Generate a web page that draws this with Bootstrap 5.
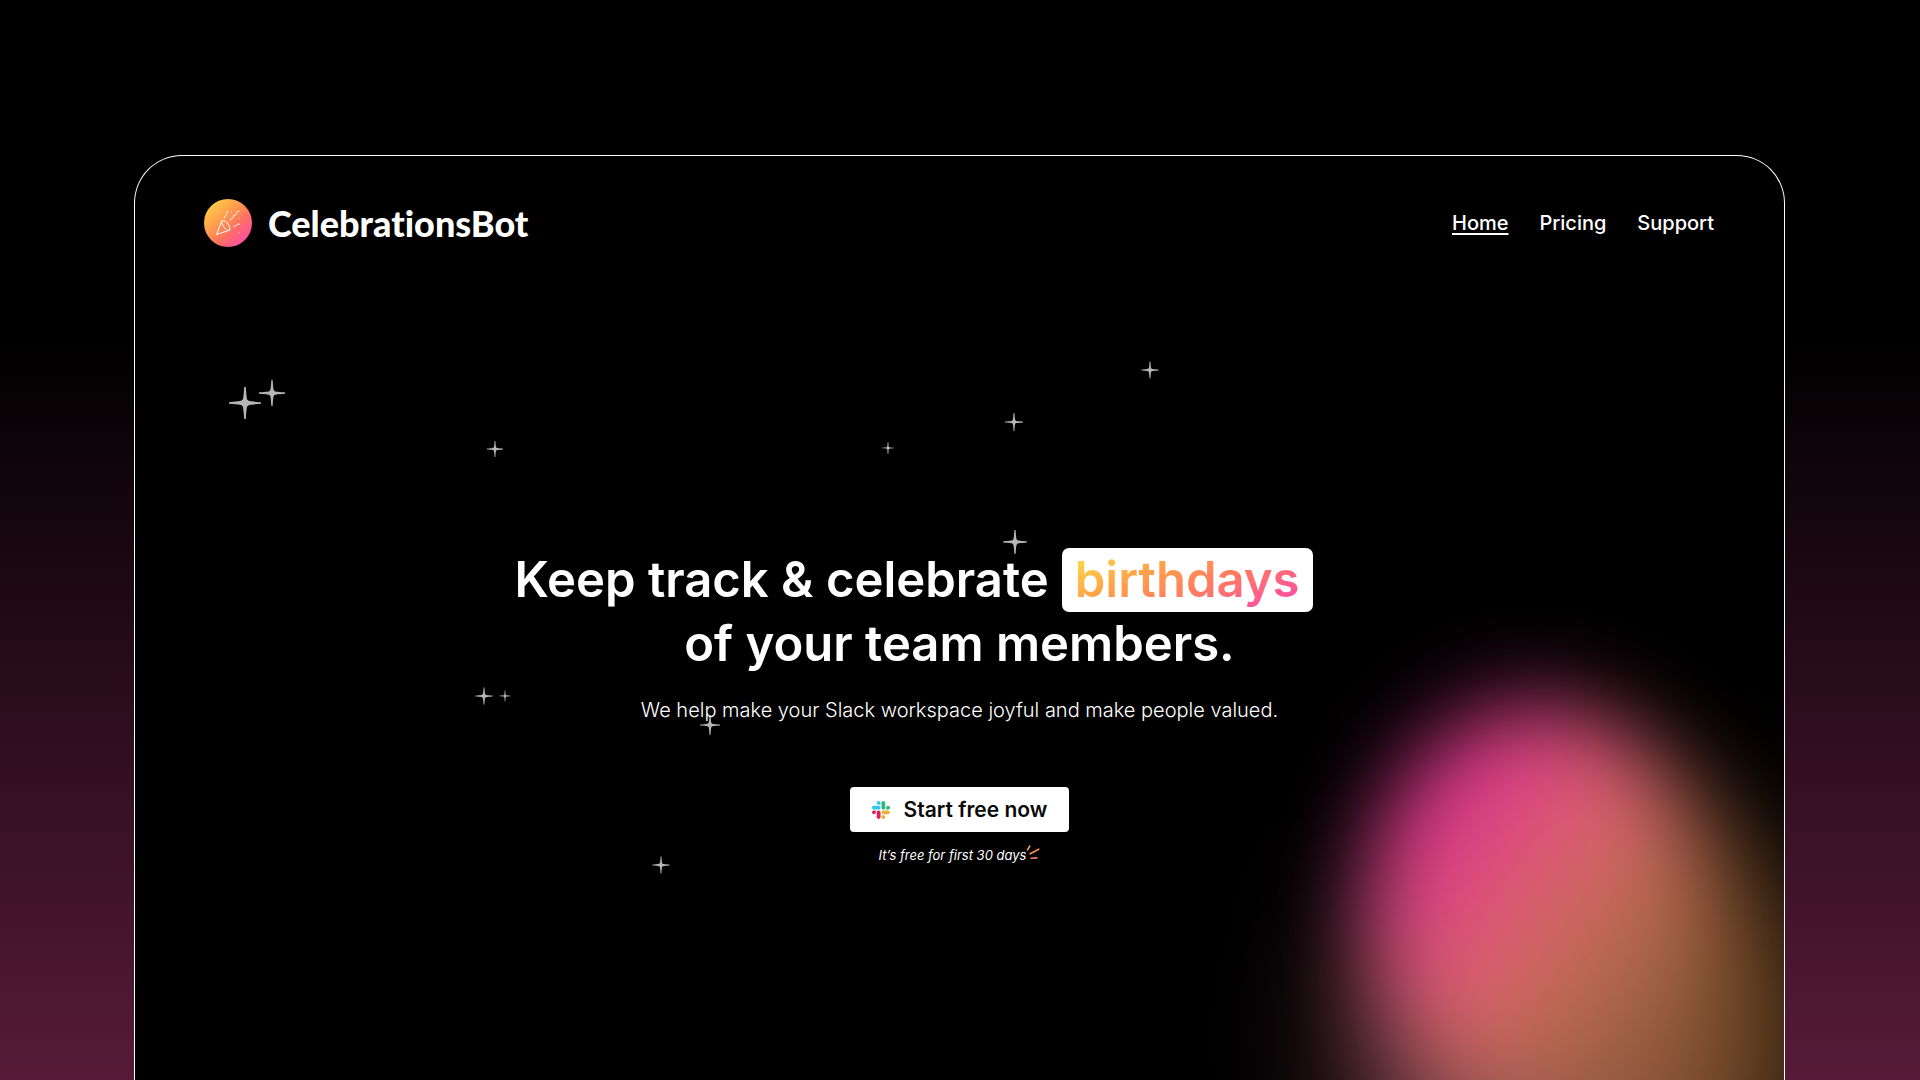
<!DOCTYPE html>
<html lang="en">
<head>
<meta charset="utf-8">
<meta name="viewport" content="width=device-width, initial-scale=1">
<title>CelebrationsBot</title>
<link href="https://cdn.jsdelivr.net/npm/bootstrap@5.3.0/dist/css/bootstrap.min.css" rel="stylesheet">
<style>
  body { font-family: Inter, sans-serif; color: #fff; background: linear-gradient(180deg, #000 31%, #571a38 100%); min-height: 100vh; padding: 155px 135px 0 134px; }
  .stage { border: 1px solid #fff; border-bottom: 0; border-radius: 48px 48px 0 0; background: #000; min-height: calc(100vh - 155px); overflow: hidden; }
  .sky { inset: 0; width: 100%; height: 100%; pointer-events: none; }
  .topbar { padding: 42px 70px 0 69px; }
  .brand-name { font-family: Lato, sans-serif; font-weight: 900; font-size: 36px; line-height: 50px; font-variant-ligatures: none; }
  .site-links { --bs-nav-link-padding-x: 0; --bs-nav-link-padding-y: 0; gap: 31px; }
  .site-links .nav-link { --bs-nav-link-color: #fff; --bs-nav-link-hover-color: #ff9a4c; --bs-nav-link-font-weight: 500; font-size: 20px; line-height: 28px; text-underline-offset: 3px; }
  .hero { padding: 300px 16px 48px; }
  .headline { font-size: 49px; font-weight: 600; line-height: 64px; width: 890px; max-width: 100%; margin-bottom: 20px; }
  .headline-row { column-gap: 13px; }
  .highlight { background: #fff; border-radius: 7px; padding: 0 13px; }
  .highlight-text { display: block; background: linear-gradient(155deg, #ffdb45 5%, #ff9f4a 35%, #ff7a63 60%, #ff4da6 92%); -webkit-background-clip: text; background-clip: text; color: transparent; }
  .pitch { font-size: 20px; font-weight: 300; line-height: 28px; margin-bottom: 63px; }
  .cta { --bs-btn-bg: #fff; --bs-btn-color: #0a0a0a; --bs-btn-hover-bg: #eee; --bs-btn-hover-color: #0a0a0a; --bs-btn-border-width: 0; --bs-btn-border-radius: 4px; --bs-btn-font-size: 21px; --bs-btn-font-weight: 600; --bs-btn-line-height: 29px; --bs-btn-padding-x: 22px; --bs-btn-padding-y: 8px; gap: 14px; margin-bottom: 13px; }
  .fineprint { font-size: 13px; line-height: 20px; }
</style>
<script src="https://cdn.jsdelivr.net/npm/bootstrap@5.3.0/dist/js/bootstrap.bundle.min.js"></script>
</head>
<body>
<div class="stage position-relative">
  <!-- night sky: glow anchored to the right edge, stars above it -->
  <svg class="sky position-absolute" aria-hidden="true">
    <defs>
      <linearGradient id="glowFill" gradientUnits="userSpaceOnUse" x1="-384" y1="624" x2="-24" y2="884">
        <stop offset="0.05" stop-color="#dc2f92"/>
        <stop offset="0.2" stop-color="#dc4184"/>
        <stop offset="0.42" stop-color="#dc646e"/>
        <stop offset="0.62" stop-color="#b56a4c"/>
        <stop offset="0.8" stop-color="#95603a"/>
        <stop offset="1" stop-color="#6b4a20"/>
      </linearGradient>
      <linearGradient id="hazeFill" gradientUnits="userSpaceOnUse" x1="-450" y1="0" x2="20" y2="0">
        <stop offset="0" stop-color="#5e3040"/>
        <stop offset="0.4" stop-color="#a05a5a"/>
        <stop offset="0.7" stop-color="#8c5638"/>
        <stop offset="1" stop-color="#5c3f18"/>
      </linearGradient>
      <filter id="soften" filterUnits="userSpaceOnUse" x="-700" y="200" width="1100" height="1200" color-interpolation-filters="sRGB">
        <feGaussianBlur stdDeviation="46"/>
      </filter>
      <filter id="softenWide" filterUnits="userSpaceOnUse" x="-900" y="100" width="1500" height="1500" color-interpolation-filters="sRGB">
        <feGaussianBlur stdDeviation="66"/>
      </filter>
      <path id="star" d="M-.5-10H.5C1-3 1.200-2 1.800-1.800C2-1.200 3-1 10-.5V.5C3 1 2 1.200 1.800 1.800C1.200 2 1 3 .5 10H-.5C-1 3-1.200 2-1.800 1.800C-2 1.200-3 1-10 .5V-.5C-3-1-2-1.200-1.800-1.800C-1.200-2-1-3-.5-10Z" fill="#b6b6b6"/>
    </defs>
    <svg x="100%" overflow="visible">
      <ellipse cx="-200" cy="880" rx="235" ry="240" fill="url(#hazeFill)" filter="url(#softenWide)"/>
      <ellipse cx="-248" cy="742" rx="162" ry="194" fill="url(#glowFill)" filter="url(#soften)"/>
    </svg>
    <use href="#star" transform="translate(110 247) scale(1.6)"/>
    <use href="#star" transform="translate(137 237) scale(1.3)"/>
    <use href="#star" transform="translate(360 293) scale(.8)"/>
    <use href="#star" transform="translate(753 292) scale(.6)"/>
    <use href="#star" transform="translate(879 266) scale(.9)"/>
    <use href="#star" transform="translate(1015 214) scale(.85)"/>
    <use href="#star" transform="translate(880 386) scale(1.2)"/>
    <use href="#star" transform="translate(349 540) scale(.85)"/>
    <use href="#star" transform="translate(370 540) scale(.55)"/>
    <use href="#star" transform="translate(575 569) scale(1)"/>
    <use href="#star" transform="translate(526 709) scale(.85)"/>
  </svg>

  <header class="topbar position-relative d-flex flex-wrap justify-content-between align-items-center">
    <a href="#" class="d-flex align-items-center gap-3 text-white text-decoration-none">
      <svg width="48" height="48" viewBox="0 0 48 48" fill="none" aria-hidden="true">
        <defs><linearGradient id="badgeFill" x1="0.1" y1="0.1" x2="0.85" y2="0.9"><stop offset="0" stop-color="#ffcf45"/><stop offset=".35" stop-color="#ffa04c"/><stop offset=".65" stop-color="#ff735f"/><stop offset="1" stop-color="#ff4da6"/></linearGradient></defs>
        <circle cx="24" cy="24" r="24" fill="url(#badgeFill)"/>
        <g stroke="#fff" stroke-linecap="round" stroke-linejoin="round">
          <path stroke-width="1" d="M17.600 22.200L12.600 35.500L25.400 31.200M18 22C19.500 20.600 22.200 22.200 24.100 25C26 27.800 26.600 30.500 25.200 31.300C23.600 32 21.200 29.900 19.500 27.300C17.900 25 17 23 18 22Z"/>
          <path stroke-width=".9" d="M20.300 18.700C19.600 16.400 23.200 17.600 22.400 15.300C21.800 13.400 24.200 14 23.500 12.200M26.300 21.400C25.400 18.200 30 20.800 29.400 17.800C28.800 14.900 33 17.200 32.300 14.500C32 12.600 33.800 12.200 35.300 12.200M29.600 28C30.200 25.400 31.800 28.300 32.600 26.200C33.200 24.400 34.600 25.100 35.600 25.200"/>
          <path stroke-width="1" stroke-opacity=".75" d="M14.400 13.700h.01M27.400 12.800h.01M35.300 19.400h.01M35.300 33.600h.01"/>
        </g>
      </svg>
      <span class="brand-name">CelebrationsBot</span>
    </a>
    <nav class="nav site-links" aria-label="Main">
      <a class="nav-link text-decoration-underline" aria-current="page" href="#">Home</a>
      <a class="nav-link" href="#">Pricing</a>
      <a class="nav-link" href="#">Support</a>
    </nav>
  </header>

  <main class="hero position-relative d-flex flex-column align-items-center">
    <h1 class="headline">
      <span class="headline-row d-flex flex-wrap"><span>Keep track &amp; celebrate</span><span class="highlight"><span class="highlight-text">birthdays</span></span></span>
      <span class="d-block text-center">of your team members.</span>
    </h1>
    <p class="pitch text-center">We help make your Slack workspace joyful and make people valued.</p>
    <button type="button" class="btn cta d-flex align-items-center">
      <svg width="18" height="18" viewBox="0 0 122.8 122.8" aria-hidden="true">
        <path fill="#e01e5a" d="M25.800 77.600c0 7.100-5.800 12.900-12.900 12.900S0 84.700 0 77.600s5.800-12.900 12.900-12.900h12.900v12.900zm6.500 0c0-7.100 5.800-12.900 12.900-12.900s12.900 5.800 12.900 12.900v32.300c0 7.100-5.800 12.900-12.900 12.900s-12.900-5.800-12.900-12.900V77.600z"/>
        <path fill="#36c5f0" d="M45.200 25.800c-7.100 0-12.900-5.800-12.900-12.900S38.100 0 45.200 0s12.900 5.800 12.900 12.900v12.900H45.200zm0 6.500c7.100 0 12.900 5.800 12.900 12.900s-5.800 12.900-12.900 12.900H12.900C5.800 58.100 0 52.300 0 45.200s5.800-12.900 12.900-12.900h32.300z"/>
        <path fill="#2eb67d" d="M97 45.200c0-7.100 5.800-12.900 12.900-12.900s12.900 5.800 12.900 12.900-5.800 12.900-12.900 12.900H97V45.200zm-6.500 0c0 7.100-5.800 12.900-12.900 12.900s-12.900-5.800-12.900-12.900V12.900C64.700 5.800 70.500 0 77.600 0s12.900 5.800 12.900 12.900v32.300z"/>
        <path fill="#ecb22e" d="M77.600 97c7.100 0 12.900 5.800 12.900 12.900s-5.800 12.900-12.900 12.900-12.900-5.800-12.900-12.900V97h12.900zm0-6.500c-7.100 0-12.900-5.800-12.900-12.900s5.800-12.900 12.900-12.900h32.300c7.100 0 12.900 5.800 12.900 12.900s-5.800 12.900-12.900 12.900H77.600z"/>
      </svg>
      Start free now
    </button>
    <p class="fineprint fst-italic d-flex mb-0">It’s free for first 30 days
      <svg width="14" height="16" viewBox="0 0 14 16" fill="none" stroke-linecap="round" stroke-width="1.6" aria-hidden="true">
        <defs><linearGradient id="sparkStroke" gradientUnits="userSpaceOnUse" x1="1" y1="1" x2="13" y2="14"><stop offset="0" stop-color="#ffb04a"/><stop offset=".5" stop-color="#ff8a55"/><stop offset="1" stop-color="#ff6a6a"/></linearGradient></defs>
        <path stroke="url(#sparkStroke)" d="M1.500 4.800L3.700 1.200M4.200 8.800L12.800 4.200M5 13.300L11 12.900"/>
      </svg>
    </p>
  </main>
</div>
</body>
</html>
